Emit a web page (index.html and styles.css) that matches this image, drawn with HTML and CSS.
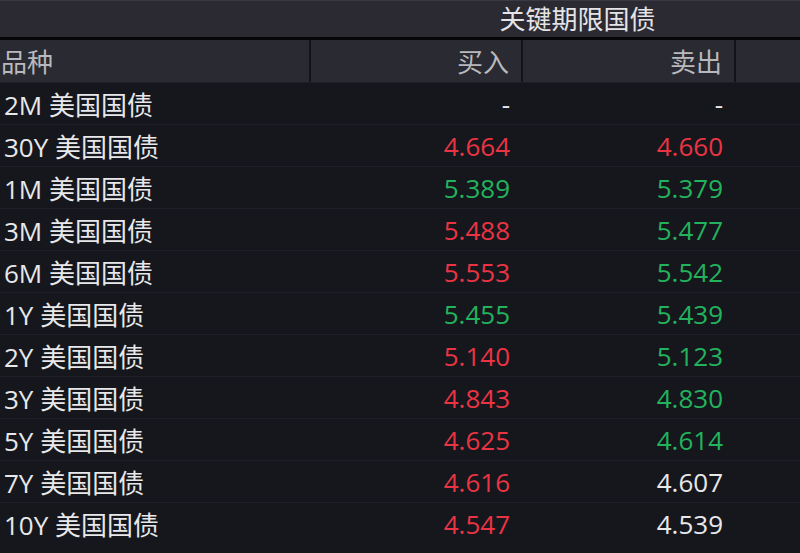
FILE: index.html
```html
<!DOCTYPE html>
<html lang="zh-CN">
<head>
<meta charset="utf-8">
<title>关键期限国债</title>
<link rel="stylesheet" href="styles.css">
</head>
<body>
<div class="board">
  <div class="title-bar"><span class="title">关键期限国债</span></div>
  <div class="head row">
    <div class="cell name">品种</div>
    <div class="cell num">买入</div>
    <div class="cell num">卖出</div>
    <div class="cell pad"></div>
  </div>
  <div class="body">
    <div class="row item"><div class="cell name">2M 美国国债</div><div class="cell num">-</div><div class="cell num">-</div><div class="cell pad"></div></div>
    <div class="row item"><div class="cell name">30Y 美国国债</div><div class="cell num up">4.664</div><div class="cell num up">4.660</div><div class="cell pad"></div></div>
    <div class="row item"><div class="cell name">1M 美国国债</div><div class="cell num down">5.389</div><div class="cell num down">5.379</div><div class="cell pad"></div></div>
    <div class="row item"><div class="cell name">3M 美国国债</div><div class="cell num up">5.488</div><div class="cell num down">5.477</div><div class="cell pad"></div></div>
    <div class="row item"><div class="cell name">6M 美国国债</div><div class="cell num up">5.553</div><div class="cell num down">5.542</div><div class="cell pad"></div></div>
    <div class="row item"><div class="cell name">1Y 美国国债</div><div class="cell num down">5.455</div><div class="cell num down">5.439</div><div class="cell pad"></div></div>
    <div class="row item"><div class="cell name">2Y 美国国债</div><div class="cell num up">5.140</div><div class="cell num down">5.123</div><div class="cell pad"></div></div>
    <div class="row item"><div class="cell name">3Y 美国国债</div><div class="cell num up">4.843</div><div class="cell num down">4.830</div><div class="cell pad"></div></div>
    <div class="row item"><div class="cell name">5Y 美国国债</div><div class="cell num up">4.625</div><div class="cell num down">4.614</div><div class="cell pad"></div></div>
    <div class="row item"><div class="cell name">7Y 美国国债</div><div class="cell num up">4.616</div><div class="cell num">4.607</div><div class="cell pad"></div></div>
    <div class="row item"><div class="cell name">10Y 美国国债</div><div class="cell num up">4.547</div><div class="cell num">4.539</div><div class="cell pad"></div></div>
  </div>
</div>
</body>
</html>
```

FILE: styles.css
```css
html, body {
  margin: 0;
  padding: 0;
  background: #15171d;
}
body {
  width: 800px;
  height: 553px;
  overflow: hidden;
  font-family: "Open Sans", "Noto Sans CJK SC", sans-serif;
  font-size: 26px;
  color: #e8e8ea;
}
.board {
  display: flex;
  flex-direction: column;
}
.title-bar {
  height: 36px;
  border-top: 1px solid #3a3a44;
  background: #2b2a33;
  border-bottom: 3px solid #050507;
  display: flex;
  align-items: center;
  justify-content: center;
  padding-left: 355px;
}
.title {
  color: #e4e4e6;
  line-height: 36px;
}
.row {
  display: grid;
  grid-template-columns: 311px 212px 213px 64px;
}
.head {
  height: 42px;
  background: #2a2a32;
  color: #b9b9bd;
}
.head .cell {
  border-right: 2px solid #131318;
}
.head .cell.pad {
  border-right: none;
}
.head .name {
  padding-left: 1px;
}
.cell {
  display: flex;
  align-items: center;
  white-space: nowrap;
  box-sizing: border-box;
}
.num {
  justify-content: flex-end;
  padding-right: 13px;
}
.name {
  padding-left: 4px;
}
.head .num {
  padding-right: 12px;
}
.item {
  height: 42px;
  box-sizing: border-box;
  border-top: 1px solid #1e2027;
  background: #15171d;
}
.up {
  color: #ea3443;
}
.down {
  color: #22b35c;
}
```
